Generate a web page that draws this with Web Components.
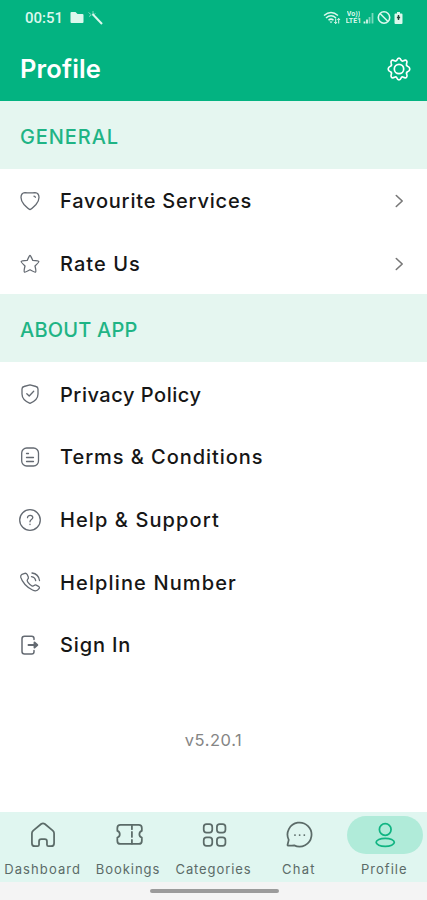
<!DOCTYPE html>
<html lang="en">
<head>
<meta charset="utf-8">
<meta name="viewport" content="width=device-width, initial-scale=1">
<title>Profile</title>
<style>
    body {
        margin: 0;
        background: #fff;
        font-family: Inter, "Liberation Sans", sans-serif;
    }
</style>
</head>
<body>
<profile-page></profile-page>

<script>
const ICONS = {
    heart: '<path d="M12 20.500Q10.500 20.200 6 15.500Q3 12 3 8.500Q3 4 7 3.700Q12 4.200 17 3.700Q21 4 21 8.500Q21 12 18 15.500Q13.500 20.200 12 20.500Z"/><path d="M16 7.200Q17.200 7.200 17.300 8.300"/>',
    star: '<path d="M12 3.500Q12.600 3.500 14.800 8.400Q20.500 8.800 20.800 9.500Q21 10.300 17 14Q18.400 19.500 17.600 20.100Q16.700 20.500 12 17.800Q7.300 20.500 6.400 20.100Q5.600 19.500 7 14Q3 10.300 3.200 9.500Q3.500 8.800 9.200 8.400Q11.400 3.500 12 3.500Z"/>',
    shield: '<path d="M12 2.800L18 4.500Q20 5 20 7V12C20 16.500 16.500 19.500 12 21.400C7.500 19.500 4 16.500 4 12V7Q4 5 6 4.500Z"/><path d="M8.800 11.700L11.200 14L15.700 9.200"/>',
    terms: '<rect x="3.700" y="3" width="16.800" height="18" rx="5"/><path d="M8.500 8.500H10.500M8.500 12.500H15.500M8.500 16.500H15.500"/>',
    help: '<circle cx="12" cy="12" r="10.300"/><path d="M9.500 9.700C9.500 6.500 14.800 6.700 14.800 9.600C14.800 11.600 12 11.600 12 13.800M12 16.200V16.600"/>',
    call: '<path d="M4 4.300L6.800 3.300Q8.300 3 9.200 4.500L10.300 7Q10.800 8.300 9.500 9.500Q8.600 10.500 10 12.400Q12 15 14 16Q15.300 16.300 16.200 15.400Q17 14.700 18.200 15.100L20.500 16.300Q22 17.200 21 18.700C19.500 21 17 21.300 14.500 20C9 17.500 4 12 2.700 7.200Q2.400 5.200 4 4.300Z"/><path d="M13.500 6.600Q17 7.100 17.700 10.700M14 3Q20.600 3.900 21.500 10.500"/>',
    sign: '<path d="M16 6.500V5.500Q16 3.200 13.700 3.200H6.500Q4 3.200 4 5.700V18.500Q4 21 6.500 21H13.700Q16 21 16 18.700V17.500" stroke-width="1.500"/><path d="M10.500 12H19M16.500 9.500L19.300 12L16.500 14.500Z" stroke-width="1.900"/>',
    gear: '<path d="M12 1.200Q13.500 1.200 14 3.100Q15 4.500 16.500 3.800Q18.500 2.700 19.500 3.700T19.500 6.800Q19 8.500 20.600 9.200Q22.800 10 22.800 12T20.600 14.800Q19 15.500 19.700 17.200Q20.600 19.300 19.500 20.300T16.400 20.200Q15 19.500 14.100 20.900Q13.500 22.800 12 22.800T9.900 20.900Q9 19.500 7.600 20.200Q5.500 21.300 4.500 20.300T4.300 17.200Q5 15.500 3.400 14.800Q1.200 14 1.200 12T3.400 9.200Q5 8.500 4.300 6.800Q3.500 4.700 4.500 3.700T7.500 3.800Q9 4.500 10 3.100Q10.500 1.200 12 1.200Z"/><circle cx="12" cy="12" r="4.700"/>',
    chevron: '<path d="M9.300 6.500L15.200 12L9.300 17.500"/>',
    home: '<path d="M10.400 2.600L3.600 8.200Q2.500 9.200 2.500 10.600V19Q2.500 21.600 5 21.600H7.300Q8.600 21.600 8.600 20.300V17.500Q8.600 15.600 10.500 15.600H13.500Q15.400 15.600 15.400 17.500V20.300Q15.400 21.600 16.700 21.600H19Q21.500 21.600 21.500 19V10.600Q21.500 9.200 20.400 8.200L13.600 2.600Q12 1.400 10.400 2.600Z"/>',
    ticket: '<path d="M4.700 3.300H20.300Q23 3.300 23 5.900V8.500C20.200 9.300 20.200 13.400 23 14.200V17.100Q23 19.700 20.300 19.700H4.700Q2 19.700 2 17.100V14.200C4.800 13.400 4.800 9.300 2 8.500V5.900Q2 3.300 4.700 3.300Z"/><path d="M14.500 4V7M14.500 9.400V13.700M14.500 16.200V19.400"/>',
    grid: '<rect x="3.200" y="2.700" width="7.300" height="7.300" rx="2.400"/><rect x="14.500" y="2.700" width="7.300" height="7.300" rx="2.400"/><rect x="3.200" y="14" width="7.300" height="7.300" rx="2.400"/><rect x="14.500" y="14" width="7.300" height="7.300" rx="2.400"/>',
    chat: '<path d="M3.200 16.200A10.300 10.300 0 1 1 7.900 20.900Q6.500 21.200 3 21.200Q2.100 21.200 2.200 20.300Z"/><path d="M8.500 12H8.600M12.500 12H12.600M16.500 12H16.600" stroke-width="1.500"/>',
    user: '<circle cx="12.200" cy="7.300" r="5"/><ellipse cx="12.200" cy="18.300" rx="7.800" ry="3.500"/>'
};

class AppIcon extends HTMLElement {
    constructor() {
        super();
        const size = this.getAttribute('size') || 22;
        const stroke = this.getAttribute('stroke') || 1.2;
        this.attachShadow({ mode: 'open' }).innerHTML = `
            <style>
                :host { display: block; flex: none; }
                svg { display: block; }
            </style>
            <svg width="${size}" height="${size}" viewBox="0 0 24 24" fill="none"
                stroke="currentColor" stroke-width="${stroke}"
                stroke-linecap="round" stroke-linejoin="round">${ICONS[this.getAttribute('name')]}</svg>
        `;
    }
}

class StatusBar extends HTMLElement {
    constructor() {
        super();
        this.attachShadow({ mode: 'open' }).innerHTML = `
            <style>
                :host {
                    display: flex;
                    align-items: center;
                    box-sizing: border-box;
                    height: 36px;
                    padding: 0 23px 0 25px;
                    color: #dcf8ed;
                }
                .time {
                    font: 500 15px Roboto, sans-serif;
                    margin-right: 7px;
                }
                .spacer { flex: 1; }
                svg { display: block; }
                .lte {
                    display: grid;
                    grid-template-rows: 7px 7px;
                    justify-items: center;
                    width: 17px;
                    margin: 0 1px 0 4px;
                    font: 700 7px/7px Roboto, sans-serif;
                }
                .lte span {
                    height: 7px;
                    overflow: hidden;
                }
            </style>
            <span class="time">00:51</span>
            <svg width="34" height="16" viewBox="0 0 34 16">
                <path d="M.5 3Q.5 2 1.500 2H5.500L7.500 4H12.500Q13.500 4 13.500 5V12Q13.500 13 12.500 13H1.500Q.5 13 .5 12Z" fill="currentColor"/>
                <path d="M22.500 4L32 14" stroke="currentColor" stroke-width="2"/>
                <path d="M18.500 2.500L21 4.500M23 1V4M19 6.500L21.500 5M25.500 3.500L24 4.500" stroke="currentColor" stroke-width=".8" opacity=".7"/>
            </svg>
            <span class="spacer"></span>
            <svg width="18" height="16" viewBox="0 0 18 16" fill="none" stroke="currentColor" stroke-width="1.500">
                <path d="M1 5.500Q8 -.5 15 5.500M3 8Q8 3.500 13 8M5.500 10.300Q8 8 10.500 10.300"/>
                <path d="M6.500 11.500H9.500L8 13.300Z" fill="currentColor" stroke="none"/>
                <path d="M12.700 8.500V13.500M11.300 12L12.700 13.700L14 12M15.700 13.500V8.500M14.400 10L15.700 8.400L17 10" stroke-width="1"/>
            </svg>
            <div class="lte"><span>Vo))</span><span>LTE1</span></div>
            <svg width="12" height="14" viewBox="0 0 12 14" stroke="currentColor" stroke-width="1.800">
                <path d="M1.500 10.500V12.500M4 8.500V12.500"/>
                <path d="M6.500 6V12.500M9.500 2V12.500" opacity=".55"/>
            </svg>
            <svg width="16" height="16" viewBox="0 0 16 16" fill="none" stroke="currentColor" stroke-width="1.600">
                <circle cx="9" cy="7.500" r="5.700"/><path d="M5 3.500L13 11.500"/>
            </svg>
            <svg width="13" height="16" viewBox="0 0 13 16">
                <path d="M6 2H9V3.500H10.500Q11.500 3.500 11.500 4.500V13Q11.500 14 10.500 14H4.500Q3.500 14 3.500 13V4.500Q3.500 3.500 4.500 3.500H6Z" fill="currentColor"/>
                <path d="M7.500 5V10M5.900 7.500H9.100" stroke="#26443a" stroke-width="1.400"/>
            </svg>
        `;
    }
}

class AppHeader extends HTMLElement {
    constructor() {
        super();
        this.attachShadow({ mode: 'open' }).innerHTML = `
            <style>
                :host {
                    display: block;
                    height: 101px;
                    background: #03b381;
                    color: #fff;
                }
                .bar {
                    display: flex;
                    align-items: center;
                    justify-content: space-between;
                    height: 65px;
                    padding: 0 16px 0 20px;
                }
                h1 {
                    margin: 0;
                    font-size: 25.500px;
                    font-weight: 600;
                    letter-spacing: 0.150px;
                }
            </style>
            <status-bar></status-bar>
            <div class="bar">
                <h1><slot></slot></h1>
                <app-icon name="gear" size="24" stroke="1.700"></app-icon>
            </div>
        `;
    }
}

class SectionTitle extends HTMLElement {
    constructor() {
        super();
        this.attachShadow({ mode: 'open' }).innerHTML = `
            <style>
                :host {
                    display: flex;
                    align-items: center;
                    box-sizing: border-box;
                    height: 68px;
                    padding: 3px 0 0 20px;
                    background: #e5f6f0;
                    color: #1fb485;
                    font-size: 20px;
                    font-weight: 500;
                    letter-spacing: var(--track, 0.5px);
                }
            </style>
            <slot></slot>
        `;
    }
}

class SettingItem extends HTMLElement {
    constructor() {
        super();
        this.attachShadow({ mode: 'open' }).innerHTML = `
            <style>
                :host {
                    display: flex;
                    align-items: center;
                    height: 62.700px;
                    padding: 0 16px 0 18px;
                    color: #161616;
                    font-size: 20px;
                    font-weight: 500;
                    letter-spacing: var(--track, 1px);
                }
                app-icon {
                    margin-top: 1px;
                    color: #646a72;
                }
                .arrow { color: #777; }
                .label {
                    flex: 1;
                    margin-left: 18px;
                    padding-top: 2px;
                    white-space: nowrap;
                }
            </style>
            <app-icon name="${this.getAttribute('icon')}" size="24" stroke="1.300"></app-icon>
            <span class="label"><slot></slot></span>
            ${this.hasAttribute('arrow') ? '<app-icon class="arrow" name="chevron" size="24" stroke="1.600"></app-icon>' : ''}
        `;
    }
}

class NavItem extends HTMLElement {
    constructor() {
        super();
        this.attachShadow({ mode: 'open' }).innerHTML = `
            <style>
                :host {
                    display: flex;
                    flex-direction: column;
                    align-items: center;
                    color: #5b6b68;
                    font-size: 13px;
                    letter-spacing: var(--track, 0.8px);
                }
                .pill {
                    display: grid;
                    place-items: center;
                    width: 76px;
                    height: 38px;
                    margin: 4px 0 6px 1px;
                    border-radius: 19px;
                }
                :host([active]) .pill {
                    background: #b0ebd9;
                    color: #10b482;
                }
                .label {
                    line-height: 18px;
                    white-space: nowrap;
                }
            </style>
            <div class="pill"><app-icon name="${this.getAttribute('icon')}" size="28" stroke="1.500"></app-icon></div>
            <span class="label"><slot></slot></span>
        `;
    }
}

class BottomNav extends HTMLElement {
    constructor() {
        super();
        this.attachShadow({ mode: 'open' }).innerHTML = `
            <style>
                :host { display: block; background: #f4f4f4; }
                nav {
                    display: grid;
                    grid-template-columns: repeat(5, minmax(0, 1fr));
                    height: 70px;
                    background: #e0f6f0;
                }
                .gesture {
                    display: flex;
                    justify-content: center;
                    height: 18px;
                }
                .gesture::before {
                    content: "";
                    width: 129px;
                    height: 4px;
                    margin: 7px 0 0 1px;
                    border-radius: 2px;
                    background: #9b9b9b;
                }
            </style>
            <nav><slot></slot></nav>
            <div class="gesture"></div>
        `;
    }
}

class ProfilePage extends HTMLElement {
    constructor() {
        super();
        this.attachShadow({ mode: 'open' }).innerHTML = `
            <style>
                :host {
                    display: flex;
                    flex-direction: column;
                    height: 900px;
                    overflow: hidden;
                }
                .version {
                    margin: 53px 0 auto;
                    color: #858585;
                    font-size: 16.500px;
                    line-height: 22px;
                    letter-spacing: 0.550px;
                    text-align: center;
                }
            </style>
            <app-header>Profile</app-header>
            <section-title style="--track: 0.9px">GENERAL</section-title>
            <setting-item icon="heart" arrow style="--track: 0.8px">Favourite Services</setting-item>
            <setting-item icon="star" arrow style="--track: 1.05px">Rate Us</setting-item>
            <section-title style="--track: 0.2px">ABOUT APP</section-title>
            <setting-item icon="shield" style="--track: 0.53px">Privacy Policy</setting-item>
            <setting-item icon="terms" style="--track: 0.95px">Terms &amp; Conditions</setting-item>
            <setting-item icon="help" style="--track: 1.1px">Help &amp; Support</setting-item>
            <setting-item icon="call" style="--track: 1.13px">Helpline Number</setting-item>
            <setting-item icon="sign" style="--track: 0.85px">Sign In</setting-item>
            <div class="version">v5.20.1</div>
            <bottom-nav>
                <nav-item icon="home" style="--track: 1.1px">Dashboard</nav-item>
                <nav-item icon="ticket" style="--track: 0.95px">Bookings</nav-item>
                <nav-item icon="grid" style="--track: 0.9px">Categories</nav-item>
                <nav-item icon="chat" style="--track: 1.3px">Chat</nav-item>
                <nav-item icon="user" style="--track: 1px" active>Profile</nav-item>
            </bottom-nav>
        `;
    }
}

customElements.define('app-icon', AppIcon);
customElements.define('status-bar', StatusBar);
customElements.define('app-header', AppHeader);
customElements.define('section-title', SectionTitle);
customElements.define('setting-item', SettingItem);
customElements.define('nav-item', NavItem);
customElements.define('bottom-nav', BottomNav);
customElements.define('profile-page', ProfilePage);
</script>
</body>
</html>
